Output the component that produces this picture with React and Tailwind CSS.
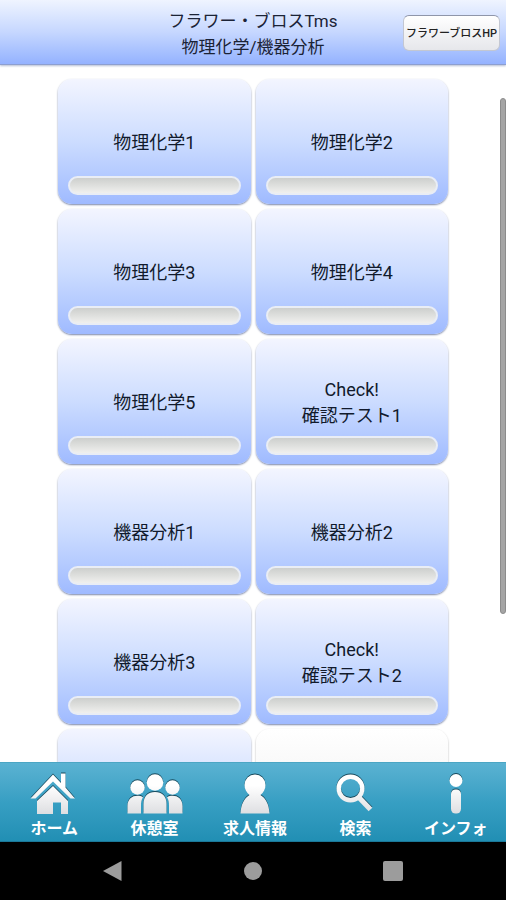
import React, { useState } from 'react';

const lessons = [
    { id: 1, lines: ['物理化学1'] },
    { id: 2, lines: ['物理化学2'] },
    { id: 3, lines: ['物理化学3'] },
    { id: 4, lines: ['物理化学4'] },
    { id: 5, lines: ['物理化学5'] },
    { id: 6, lines: ['Check!', '確認テスト1'] },
    { id: 7, lines: ['機器分析1'] },
    { id: 8, lines: ['機器分析2'] },
    { id: 9, lines: ['機器分析3'] },
    { id: 10, lines: ['Check!', '確認テスト2'] },
];

const HomeIcon = () => (
    <>
        <path d="M11 28 L27 13 L42 28 V41 H35 V29.5 H27 V41 H11 Z" />
        <path d="M4.5 25.5 L27 1.5 L35 10 V0.5 H39.5 V14.5 L49 25.5 H44.5 L27 8.5 L9.5 25.5 Z" />
    </>
);

const PeopleIcon = () => (
    <>
        <circle cx="10.5" cy="14.5" r="7.2" />
        <circle cx="45.5" cy="14.5" r="7.2" />
        <path d="M0.5 40.5 V33 C0.5 26 5 22.8 10.5 22.8 C12.5 22.8 14.5 23.2 16 24.2 C14.5 26.5 14 29.5 14 32.5 V40.5 Z" />
        <path d="M55.5 40.5 V33 C55.5 26 51 22.8 45.5 22.8 C43.5 22.8 41.5 23.2 40 24.2 C41.5 26.5 42 29.5 42 32.5 V40.5 Z" />
        <circle cx="28" cy="9.5" r="8.3" />
        <path d="M16.5 40.5 V31 C16.5 23 21 19 28 19 C35 19 39.5 23 39.5 31 V40.5 Z" />
    </>
);

const PersonIcon = () => (
    <path d="M13.5 40.5 C14 31.5 17 25.5 22.5 22 C19.5 19.5 17.5 16 17.5 12 A10.5 10.5 0 0 1 38.5 12 C38.5 16 36.5 19.5 33.5 22 C39 25.5 42 31.5 42.5 40.5 Z" />
);

const SearchIcon = () => (
    <g fill="none" stroke="url(#fill-search)">
        <circle cx="23.5" cy="15.5" r="11.8" strokeWidth="4.4" />
        <path d="M32 24.5 L43.5 36.5" strokeWidth="5.2" />
    </g>
);

const InfoIcon = () => (
    <>
        <circle cx="28" cy="7.5" r="6.5" />
        <rect x="23" y="16.5" width="10" height="24" rx="4.5" />
    </>
);

const tabs = [
    { id: 'home', label: 'ホーム', Icon: HomeIcon },
    { id: 'lounge', label: '休憩室', Icon: PeopleIcon },
    { id: 'jobs', label: '求人情報', Icon: PersonIcon },
    { id: 'search', label: '検索', Icon: SearchIcon },
    { id: 'info', label: 'インフォ', Icon: InfoIcon },
];

const LessonCard = ({ lines }) => (
    <button
        type="button"
        className="flex h-[125px] flex-col rounded-[14px] bg-linear-to-b from-[#f3f5ff] via-[#ccdcff] to-[#9fbaff] px-[10px] pt-[30px] pb-[9px] shadow-[0_1px_2px_#7b87a8]"
    >
        <span className="flex w-full flex-1 flex-col items-center justify-center text-lg leading-[26px] text-[#111a2c]">
            {lines.map((line) => (
                <span key={line}>{line}</span>
            ))}
        </span>
        <span className="h-[19px] w-full rounded-full border-2 border-[#e9edf5] bg-linear-to-b from-[#cdcfcd] to-[#f0f0ee]"></span>
    </button>
);

const App = () => {
    const [activeTab, setActiveTab] = useState('home');

    return (
        <div className="flex h-screen flex-col bg-white font-[Roboto,'Noto_Sans_CJK_JP',sans-serif]">
            <header className="grid h-[65px] shrink-0 grid-cols-[1fr_auto_1fr] items-center border-b border-[#8d9fd0] bg-linear-to-b from-[#eff4ff] via-[#c6d7ff] to-[#94b2ff] px-[6px] shadow-[0_1px_2px_#b4bdd4]">
                <h1 className="col-start-2 pt-1 text-center text-[17px] leading-[26px] text-[#1b2336]">
                    フラワー・ブロスTms
                    <br />
                    物理化学/機器分析
                </h1>
                <a
                    href="#hp"
                    className="mt-[2px] flex h-9 w-[97px] items-center justify-center justify-self-end rounded-md border border-[#c3c7d2] border-t-[#8f96aa] bg-linear-to-b from-white to-[#e6e7eb] pt-[2px] text-[11px] font-medium whitespace-nowrap text-[#222222]"
                >
                    フラワーブロスHP
                </a>
            </header>

            <div className="relative min-h-0 flex-1">
                <main className="h-full overflow-y-auto [scrollbar-width:none]">
                    <div className="mx-auto grid max-w-[390px] grid-cols-2 gap-[5px] pt-[14px] pb-4">
                        {lessons.map((lesson) => (
                            <LessonCard key={lesson.id} lines={lesson.lines} />
                        ))}
                        <LessonCard lines={[]} />
                        <div className="h-[125px] rounded-[14px] bg-linear-to-b from-white to-[#ececec] shadow-[0_1px_2px_#aaaaaa]"></div>
                    </div>
                </main>
                {/* Scroll indicator */}
                <div className="absolute top-[33px] right-0 h-[74%] w-[6px] rounded-full border border-[#8c8c8c] bg-[#a5a5a5]"></div>
            </div>

            <nav className="grid h-20 shrink-0 grid-cols-5 border-t border-b border-t-[#4ba6c4] border-b-[#1b7899] bg-linear-to-b from-[#5ab2d2] via-[#379fc3] to-[#218fb4] pl-1">
                {tabs.map(({ id, label, Icon }) => (
                    <button
                        key={id}
                        type="button"
                        aria-current={id === activeTab ? 'page' : undefined}
                        onClick={() => setActiveTab(id)}
                        className="flex flex-col items-center pt-[10px] text-base leading-6 font-bold whitespace-nowrap text-white"
                    >
                        <svg viewBox="0 0 56 42" className="h-[42px] w-14 overflow-visible drop-shadow-[0_-1px_0_#17495c]" aria-hidden="true">
                            <defs>
                                <linearGradient id={`fill-${id}`} gradientUnits="userSpaceOnUse" x1="0" y1="0" x2="0" y2="42">
                                    <stop offset="0.3" stopColor="#ffffff" />
                                    <stop offset="1" stopColor="#dcdde0" />
                                </linearGradient>
                            </defs>
                            <g fill={`url(#fill-${id})`}>
                                <Icon />
                            </g>
                        </svg>
                        <span className="pt-[2px]">{label}</span>
                    </button>
                ))}
            </nav>

            {/* Android system buttons */}
            <div className="flex h-[58px] shrink-0 items-center justify-center gap-[120px] bg-black">
                <button type="button" aria-label="戻る">
                    <svg viewBox="0 0 20 20" className="size-5 fill-[#9c9c9c]">
                        <path d="M0 10 L18.5 0 V20 Z" />
                    </svg>
                </button>
                <button type="button" aria-label="ホーム画面" className="flex size-5 items-center justify-center">
                    <span className="size-[18px] rounded-full bg-[#9c9c9c]"></span>
                </button>
                <button type="button" aria-label="アプリ履歴" className="size-5 rounded-xs bg-[#9c9c9c]"></button>
            </div>
        </div>
    );
};

export default App;
